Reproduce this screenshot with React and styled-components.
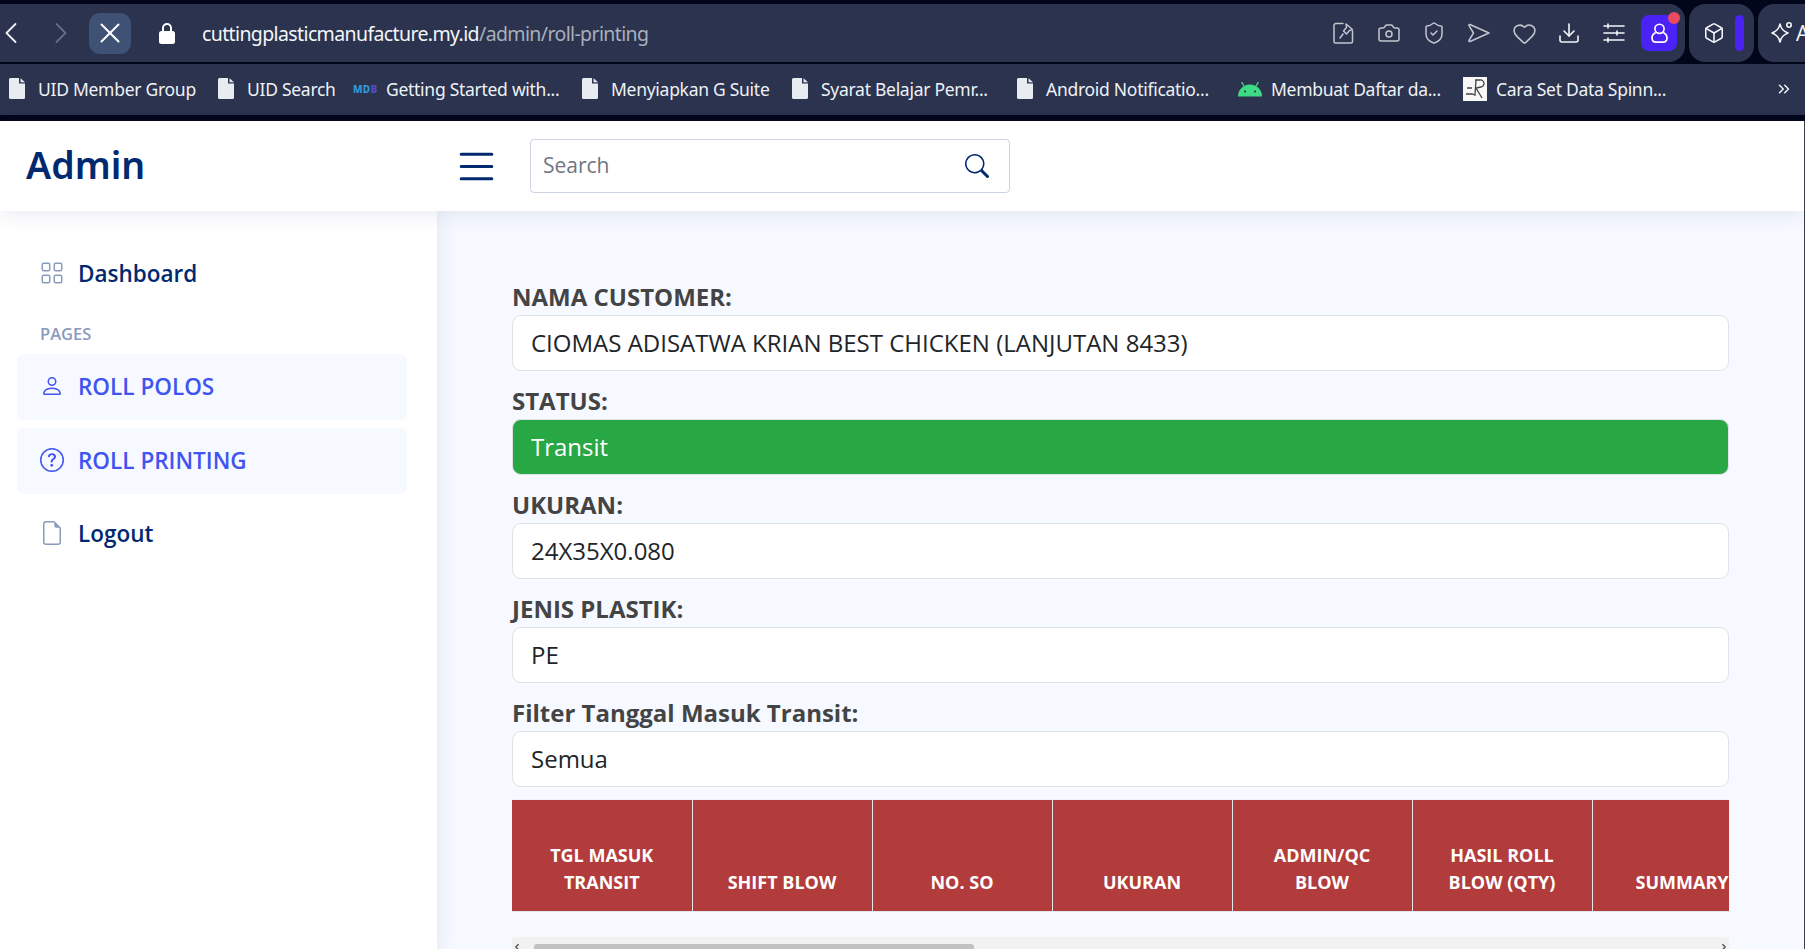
import React from 'react';
import styled, { createGlobalStyle } from 'styled-components';
import { ChevronLeft, ChevronRight, ChevronsRight, X, Camera, ShieldCheck, Heart, Download, Box } from 'lucide-react';
import { BsGrid, BsPerson, BsQuestionCircle, BsFileEarmark, BsSearch, BsList } from 'react-icons/bs';

const GlobalStyle = createGlobalStyle`
  html, body {
    margin: 0;
    padding: 0;
    background: #f6f9ff;
    font-family: "Open Sans", "Noto Sans", sans-serif;
  }
  #root {
    height: 949px;
    overflow: hidden;
  }
  * {
    box-sizing: border-box;
  }
`

const Page = styled.div`
  height: 949px;
  display: flex;
  flex-direction: column;
  overflow: hidden;
`

const BrowserChrome = styled.div`
  flex: none;
  height: 121px;
  padding-top: 4px;
  background: #02061a;
`

const Toolbar = styled.div`
  height: 58px;
  display: flex;
  gap: 4px;
`

const AddressSegment = styled.div`
  flex: 1;
  display: flex;
  align-items: center;
  padding-right: 8px;
  background: #2b334e;
  border-radius: 0 16px 16px 0;
`

const SideSegment = styled.div`
  flex: none;
  width: ${props => props.$width}px;
  display: flex;
  align-items: center;
  gap: 10px;
  padding-left: ${props => props.$pad}px;
  overflow: hidden;
  background: #2b334e;
  border-radius: ${props => props.$open ? '16px 0 0 16px' : '16px'};
  color: #f4f6fa;
  font-size: 21px;
  svg {
    flex: none;
  }
`

const NavButton = styled.div`
  flex: none;
  width: ${props => props.$width}px;
  display: flex;
  justify-content: center;
  color: ${props => props.$dim ? '#666d80' : '#f0f2f6'};
  svg {
    flex: none;
  }
`

const StopButton = styled.div`
  flex: none;
  width: 42px;
  height: 41px;
  margin-left: -11px;
  display: flex;
  align-items: center;
  justify-content: center;
  border-radius: 11px;
  background: #3f5175;
  color: #fff;
`

const LockIcon = styled.svg`
  margin-left: 28px;
  width: 16px;
  height: 22px;
`

const Url = styled.div`
  margin-left: 27px;
  font-family: "Noto Sans", sans-serif;
  font-size: 19.5px;
  letter-spacing: -0.62px;
  color: #f4f6fa;
  white-space: nowrap;
  span {
    color: #a9afbc;
  }
`

const Tools = styled.div`
  margin-left: auto;
  display: flex;
  align-items: center;
  gap: 5px;
`

const ToolButton = styled.div`
  width: 40px;
  display: flex;
  justify-content: center;
  color: ${props => props.$bright ? '#f4f6fa' : '#c3c6ce'};
`

const ProfileButton = styled.div`
  position: relative;
  width: 36px;
  height: 36px;
  margin-left: 2px;
  display: flex;
  align-items: center;
  justify-content: center;
  border-radius: 8px;
  background: #4a22f5;
  color: #fff;
`

const Badge = styled.span`
  position: absolute;
  top: -3px;
  right: -3px;
  width: 12px;
  height: 12px;
  border-radius: 50%;
  background: #e84a5f;
`

const PurpleBar = styled.div`
  flex: none;
  width: 9px;
  height: 36px;
  border-radius: 5px;
  background: #4a22f5;
`

const AssistantLabel = styled.span`
  flex: none;
  display: flex;
  align-items: center;
  gap: 1px;
`

const Bookmarks = styled.div`
  height: 51px;
  margin-top: 2px;
  display: flex;
  align-items: center;
  padding: 0 0 2px 9px;
  background: #2b334e;
  color: #eef1f6;
  font-family: "Noto Sans", sans-serif;
  font-size: 17.5px;
  white-space: nowrap;
`

const Bookmark = styled.div`
  flex: none;
  width: ${props => props.$width}px;
  display: flex;
  align-items: center;
  gap: ${props => props.$gap || 13}px;
  svg {
    flex: none;
  }
`

const BookmarkLabel = styled.span`
  letter-spacing: -0.28px;
`

const MdbMark = styled.span`
  width: 24px;
  font-size: 10px;
  font-weight: 800;
  letter-spacing: 0.3px;
  color: #2f9bd6;
  span {
    color: #5a4bc4;
  }
`

const OverflowMark = styled.div`
  margin-left: auto;
  margin-right: 12px;
  display: flex;
`

const Content = styled.div`
  flex: 1;
  min-height: 0;
  display: flex;
  flex-direction: column;
  border-right: 1px solid #3a3f4a;
`

const Header = styled.header`
  position: relative;
  z-index: 2;
  flex: none;
  height: 90px;
  display: flex;
  align-items: center;
  padding-left: 26px;
  background: #fff;
  box-shadow: 0 2px 20px rgba(1, 41, 112, 0.1);
`

const Logo = styled.div`
  width: 426px;
  padding-bottom: 3px;
  font-family: "Noto Sans", sans-serif;
  font-size: 37.5px;
  font-weight: 600;
  color: #012970;
`

const Burger = styled.div`
  width: 78px;
  display: flex;
  color: #012970;
`

const SearchBar = styled.div`
  width: 480px;
  height: 54px;
  display: flex;
  align-items: center;
  justify-content: space-between;
  padding: 0 20px 0 12px;
  border: 1px solid rgba(1, 41, 112, 0.2);
  border-radius: 4px;
  color: #012970;
`

const SearchInput = styled.input`
  border: none;
  outline: none;
  background: transparent;
  width: 300px;
  padding: 0 0 2px;
  font-family: "Open Sans", sans-serif;
  font-size: 21px;
  &::placeholder {
    color: #6f7680;
    opacity: 1;
  }
`

const Body = styled.div`
  flex: 1;
  min-height: 0;
  display: grid;
  grid-template-columns: 437px 1fr;
`

const Sidebar = styled.aside`
  position: relative;
  z-index: 1;
  padding: 29px 30px 0 17px;
  background: #fff;
  box-shadow: 0 0 20px rgba(1, 41, 112, 0.1);
`

const NavItem = styled.a`
  height: 66px;
  margin-bottom: ${props => props.$tight ? 6 : 8}px;
  display: flex;
  align-items: center;
  gap: 14px;
  padding: 0 0 ${props => props.$active ? 2 : 0}px 23px;
  border-radius: 7px;
  background: ${props => props.$active ? '#f6f9ff' : 'transparent'};
  color: ${props => props.$active ? '#4154f1' : '#012970'};
  font-size: 22.5px;
  font-weight: 600;
  svg {
    width: 24px;
    height: 24px;
    flex: none;
    color: ${props => props.$active ? '#4154f1' : '#899bbd'};
  }
`

const NavHeading = styled.div`
  height: 42px;
  margin-top: -2px;
  padding: 10px 0 0 23px;
  color: #899bbd;
  font-size: 16.5px;
  font-weight: 600;
  line-height: 24px;
`

const Main = styled.main`
  min-width: 0;
  padding: 68px 75px 0 75px;
  background: #f6f9ff;
`

const Field = styled.div`
  margin-bottom: 12.5px;
`

const Label = styled.label`
  display: block;
  height: 36px;
  line-height: 36px;
  font-size: 24px;
  font-weight: 700;
  color: #444;
`

const Input = styled.input`
  display: block;
  width: 100%;
  height: 55.5px;
  padding: 0 18px;
  border: 1px solid #dee2e6;
  border-radius: 9px;
  outline: none;
  background: ${props => props.$status ? '#28a745' : '#fff'};
  color: ${props => props.$status ? '#fff' : '#212529'};
  font-family: "Open Sans", sans-serif;
  font-size: 24px;
`

const TableWrap = styled.div`
  overflow: hidden;
  margin-bottom: 25px;
`

const Table = styled.table`
  table-layout: fixed;
  width: 1260px;
  border-collapse: collapse;
`

const Th = styled.th`
  width: 180px;
  height: 112px;
  padding: 0 12px 15px;
  vertical-align: bottom;
  background: #b23b3c;
  border: 1px solid #e4e7ec;
  border-top-color: #eef1f6;
  color: #fff;
  font-size: 18px;
  font-weight: 700;
  line-height: 27px;
  text-align: center;
  &:first-child {
    border-left: none;
  }
`

const ScrollTrack = styled.div`
  height: 20px;
  display: flex;
  align-items: flex-start;
  justify-content: space-between;
  background: #f1f1f1;
  color: #505050;
`

const ScrollThumb = styled.div`
  width: 440px;
  height: 14px;
  margin: 7px auto 0 12px;
  border-radius: 3px;
  background: #c1c1c1;
`

const ScrollArrow = styled.div`
  margin-top: 5px;
  display: flex;
`

const FileIcon = () => (
  <svg width="16" height="21" viewBox="0 0 16 21">
    <path fill="#e8ecf1" d="M1.500 0H10v5.500h6V19.500a1.500 1.500 0 0 1-1.500 1.500h-13A1.500 1.500 0 0 1 0 19.500V1.500A1.500 1.500 0 0 1 1.500 0Z" />
    <path fill="#e8ecf1" d="M11.500 0.300 16 4.200H11.500Z" />
  </svg>
);

const AndroidIcon = () => (
  <svg width="24" height="16" viewBox="0 0 24 16">
    <path fill="#3ddc84" d="M0 15.500a12 12 0 0 1 24 0Z" />
    <path stroke="#3ddc84" strokeWidth="1.400" d="M6 5 3.600 1M18 5l2.400-4" />
    <circle cx="7" cy="10.500" r="1.100" fill="#2b334e" />
    <circle cx="17" cy="10.500" r="1.100" fill="#2b334e" />
  </svg>
);

const ScribbleIcon = () => (
  <svg width="24" height="24" viewBox="0 0 24 24">
    <rect width="24" height="24" fill="#f7f7f7" />
    <path fill="none" stroke="#444" strokeWidth="1.300" d="M12 3h5a3.500 3.500 0 0 1 1 7l-5 1 6 10M13 3l-1 15-3-1H3M4 11h5" />
  </svg>
);

const NoteIcon = () => (
  <svg width="24" height="24" viewBox="0 0 24 24" fill="none" stroke="currentColor" strokeWidth="1.500" strokeLinecap="round" strokeLinejoin="round">
    <path d="M11 2.500H4a2 2 0 0 0-2 2v16a1.500 1.500 0 0 0 1.500 1.500h15.500a1.500 1.500 0 0 0 1.500-1.500V10" />
    <path d="m14 3 6.500 5.500-3 1-3 3.500-3-3 3-3.500ZM11 13l-3 4" />
  </svg>
);

const SendIcon = () => (
  <svg width="24" height="24" viewBox="0 0 24 24" fill="none" stroke="currentColor" strokeWidth="1.500" strokeLinejoin="round">
    <path d="M3 3.500 22 12 3 20.500c-1 .3-1.300-.5-1-1.200L6.500 12 2 4.700c-.3-.8 0-1.500 1-1.200Z" />
  </svg>
);

const SlidersIcon = () => (
  <svg width="22" height="20" viewBox="0 0 22 20" fill="none" stroke="currentColor" strokeWidth="1.600" strokeLinecap="round">
    <path d="M1 3h20M1 10h20M1 17h20" />
    <path fill="currentColor" d="M5 1v4M14 8v4M5 15v4" />
  </svg>
);

const ProfileIcon = () => (
  <svg width="17" height="20" viewBox="0 0 20 24" fill="none" stroke="currentColor" strokeWidth="2">
    <circle cx="10" cy="7" r="5.500" />
    <path d="M5.500 11.500C2.500 13 1 15 1 18c0 3 2 5 5 5h8c3 0 5-2 5-5 0-3-1.500-5-4.500-6.500" />
  </svg>
);

const SparkIcon = () => (
  <svg width="26" height="26" viewBox="0 0 26 26" fill="none" stroke="currentColor" strokeWidth="1.600" strokeLinejoin="round">
    <path d="M11 4c1 5 3 7 8 9-5 2-7 4-8 9-1-5-3-7-8-9 5-2 7-4 8-9Z" />
    <circle cx="20" cy="5" r="2.200" />
  </svg>
);

const bookmarks = [
  { label: 'UID Member Group', width: 209 },
  { label: 'UID Search', width: 135 },
  { label: 'Getting Started with...', width: 229, mark: 'mdb', gap: 9 },
  { label: 'Menyiapkan G Suite', width: 210 },
  { label: 'Syarat Belajar Pemr...', width: 225 },
  { label: 'Android Notificatio...', width: 221 },
  { label: 'Membuat Daftar da...', width: 225, mark: 'android', gap: 9 },
  { label: 'Cara Set Data Spinn...', width: 220, mark: 'scribble', gap: 9 },
];

const fields = [
  { label: 'NAMA CUSTOMER:', value: 'CIOMAS ADISATWA KRIAN BEST CHICKEN (LANJUTAN 8433)' },
  { label: 'STATUS:', value: 'Transit', status: true },
  { label: 'UKURAN:', value: '24X35X0.080' },
  { label: 'JENIS PLASTIK:', value: 'PE' },
  { label: 'Filter Tanggal Masuk Transit:', value: 'Semua' },
];

const columns = [
  ['TGL MASUK', 'TRANSIT'],
  ['SHIFT BLOW'],
  ['NO. SO'],
  ['UKURAN'],
  ['ADMIN/QC', 'BLOW'],
  ['HASIL ROLL', 'BLOW (QTY)'],
  ['SUMMARY'],
];

function markFor(mark) {
  if (mark === 'mdb') return <MdbMark>MD<span>B</span></MdbMark>;
  if (mark === 'android') return <AndroidIcon />;
  if (mark === 'scribble') return <ScribbleIcon />;
  return <FileIcon />;
}

export default function App() {
  return (
    <Page>
      <GlobalStyle />
      <BrowserChrome>
        <Toolbar>
          <AddressSegment>
            <NavButton $width={22}><ChevronLeft size={36} strokeWidth={1.2} /></NavButton>
            <NavButton $width={78} $dim><ChevronRight size={36} strokeWidth={1.2} /></NavButton>
            <StopButton><X size={34} strokeWidth={1.4} /></StopButton>
            <LockIcon viewBox="0 0 16 22">
              <path fill="none" stroke="#fff" strokeWidth="2" d="M4 10V6a4 4 0 0 1 8 0v4" />
              <rect y="9" width="16" height="13" rx="2.500" fill="#fff" />
            </LockIcon>
            <Url>cuttingplasticmanufacture.my.id<span>/admin/roll-printing</span></Url>
            <Tools>
              <ToolButton><NoteIcon /></ToolButton>
              <ToolButton><Camera size={24} strokeWidth={1.5} /></ToolButton>
              <ToolButton><ShieldCheck size={24} strokeWidth={1.5} /></ToolButton>
              <ToolButton><SendIcon /></ToolButton>
              <ToolButton><Heart size={25} strokeWidth={1.5} /></ToolButton>
              <ToolButton $bright><Download size={24} strokeWidth={1.6} /></ToolButton>
              <ToolButton $bright><SlidersIcon /></ToolButton>
              <ProfileButton><ProfileIcon /><Badge /></ProfileButton>
            </Tools>
          </AddressSegment>
          <SideSegment $width={65} $pad={14}>
            <Box size={22} strokeWidth={1.7} />
            <PurpleBar />
          </SideSegment>
          <SideSegment $width={47} $pad={11} $open>
            <AssistantLabel><SparkIcon />A</AssistantLabel>
          </SideSegment>
        </Toolbar>
        <Bookmarks>
          {bookmarks.map(b => (
            <Bookmark key={b.label} $width={b.width} $gap={b.gap}>
              {markFor(b.mark)}
              <BookmarkLabel>{b.label}</BookmarkLabel>
            </Bookmark>
          ))}
          <OverflowMark><ChevronsRight size={18} strokeWidth={2} /></OverflowMark>
        </Bookmarks>
      </BrowserChrome>
      <Content>
        <Header>
          <Logo>Admin</Logo>
          <Burger><BsList size={49} /></Burger>
          <SearchBar>
            <SearchInput placeholder="Search" readOnly />
            <BsSearch size={24} />
          </SearchBar>
        </Header>
        <Body>
          <Sidebar>
            <NavItem><BsGrid />Dashboard</NavItem>
            <NavHeading>PAGES</NavHeading>
            <NavItem $active><BsPerson />ROLL POLOS</NavItem>
            <NavItem $active $tight><BsQuestionCircle />ROLL PRINTING</NavItem>
            <NavItem><BsFileEarmark />Logout</NavItem>
          </Sidebar>
          <Main>
            {fields.map(f => (
              <Field key={f.label}>
                <Label>{f.label}</Label>
                <Input readOnly value={f.value} $status={f.status} />
              </Field>
            ))}
            <TableWrap>
              <Table>
                <thead>
                  <tr>
                    {columns.map(c => (
                      <Th key={c[0]}>{c.map((line, i) => <React.Fragment key={line}>{i > 0 && <br />}{line}</React.Fragment>)}</Th>
                    ))}
                  </tr>
                </thead>
              </Table>
            </TableWrap>
            <ScrollTrack>
              <ScrollArrow><ChevronLeft size={10} strokeWidth={3} /></ScrollArrow>
              <ScrollThumb />
              <ScrollArrow><ChevronRight size={10} strokeWidth={3} /></ScrollArrow>
            </ScrollTrack>
          </Main>
        </Body>
      </Content>
    </Page>
  );
}
